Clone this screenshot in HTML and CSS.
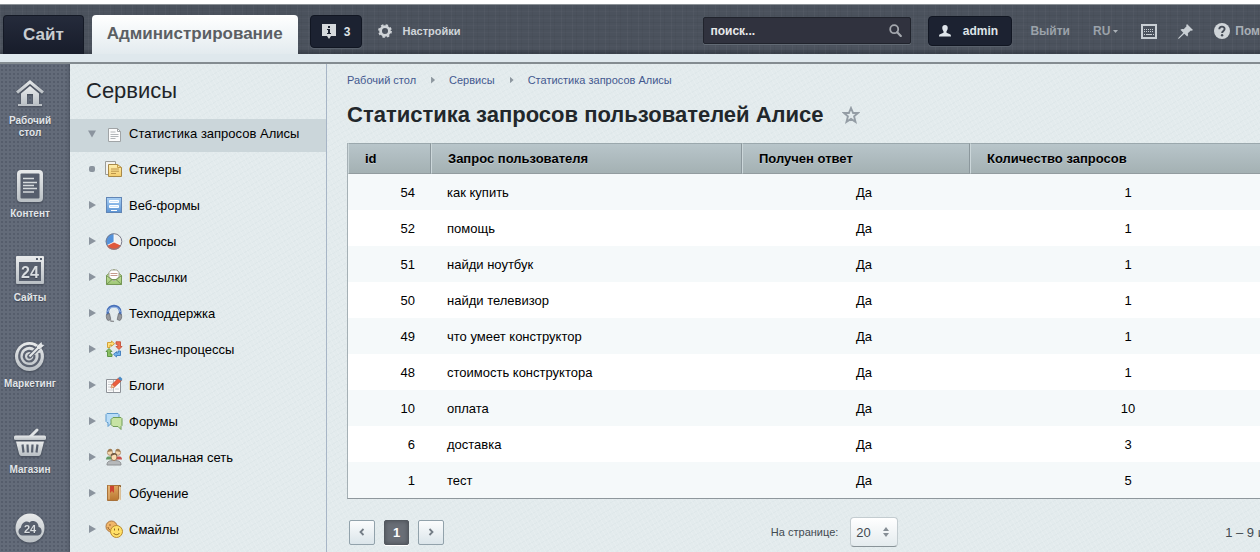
FILE: index.html
```html
<!DOCTYPE html>
<html lang="ru">
<head>
<meta charset="utf-8">
<title>Статистика запросов пользователей Алисе</title>
<link rel="stylesheet" href="styles.css">
</head>
<body>
<svg class="defs" aria-hidden="true">
  <defs>
    <linearGradient id="silver" x1="0" y1="0" x2="0" y2="1"><stop offset="0" stop-color="#e9ebec"/><stop offset="1" stop-color="#b9bfc4"/></linearGradient>
    <linearGradient id="blue" x1="0" y1="0" x2="0" y2="1"><stop offset="0" stop-color="#a9d0f5"/><stop offset="1" stop-color="#5b93d3"/></linearGradient>
    <linearGradient id="green" x1="0" y1="0" x2="0" y2="1"><stop offset="0" stop-color="#e0efb9"/><stop offset="1" stop-color="#9cc673"/></linearGradient>
    <linearGradient id="sand" x1="0" y1="0" x2="0" y2="1"><stop offset="0" stop-color="#fff0b0"/><stop offset="1" stop-color="#f3cc6c"/></linearGradient>
    <linearGradient id="brown" x1="0" y1="0" x2="0" y2="1"><stop offset="0" stop-color="#e0a860"/><stop offset="1" stop-color="#b97630"/></linearGradient>
  </defs>
</svg>
<header class="topbar">
  <nav class="tabs">
    <a class="tab tab-site" href="#">Сайт</a>
    <a class="tab tab-admin" href="#">Администрирование</a>
  </nav>
  <button class="dark-button notices" type="button">
    <svg width="14" height="15" viewBox="0 0 14 15"><path d="M0 0h14v12H9l-2 3-2-3H0z" fill="#d5d9dc"/><path d="M6 2h2v2H6zM5 5h3v4h1v1H5V9h1V6H5z" fill="#1d2331"/></svg>
    <span>3</span>
  </button>
  <a class="settings" href="#">
    <svg width="14" height="14" viewBox="0 0 14 14"><circle cx="7" cy="7" r="4.400" fill="none" stroke="#d0d4d8" stroke-width="2.800"/><circle cx="7" cy="7" r="6" fill="none" stroke="#d0d4d8" stroke-width="1.800" stroke-dasharray="2.400 2.310"/></svg>
    <span>Настройки</span>
  </a>
  <form class="search">
    <input type="text" aria-label="Поиск" value="поиск...">
    <button type="button" aria-label="Найти"><svg width="13" height="13" viewBox="0 0 13 13" fill="none" stroke="#a4a8ae"><circle cx="5.200" cy="5.200" r="4" stroke-width="1.800"/><path d="M8.200 8.200l3.600 3.800" stroke-width="2.200" stroke-linecap="round"/></svg></button>
  </form>
  <button class="dark-button user" type="button">
    <svg width="12" height="12" viewBox="0 0 12 12"><path d="M6 0c2 0 3 1.200 2.700 3.500-.2 1.400-.7 2-1.200 2.700v1.600L11 9.300c.8.400 1 1.200 1 2.200H0c0-1 .2-1.800 1-2.200l3.500-1.500V6.200C4 5.500 3.500 4.900 3.300 3.500 3 1.200 4 0 6 0z" fill="#dfe5ea"/></svg>
    <span>admin</span>
  </button>
  <nav class="tools">
    <a class="tool-text" href="#">Выйти</a>
    <a class="tool-text lang" href="#">RU<svg width="5" height="3" viewBox="0 0 5 3"><path d="M0 0h5L2.500 3z" fill="#a9afb6"/></svg></a>
    <a href="#" aria-label="Горячие клавиши"><svg width="16" height="15" viewBox="0 0 16 15"><path d="M1 1h14v13H1z" fill="none" stroke="#c9cfd4" stroke-width="2"/><path d="M3 5.500h10M3 7.500h10" stroke="#c9cfd4" stroke-dasharray="1 1"/><path d="M3 10.500h1m1 0h6m1 0h1" stroke="#c9cfd4"/></svg></a>
    <a href="#" aria-label="Закрепить"><svg width="15" height="15" viewBox="0 0 15 15"><path d="M9 0l6 6-1.200.8-1-.3L9.800 9.300c.4 1.400.2 2.500-.6 3.300L6.300 9.700 1.200 14.600 0 15l.5-1.200L5.300 8.700 2.400 5.800c.8-.8 1.900-1 3.300-.6l2.800-3-.3-1z" fill="#c9cfd4"/></svg></a>
    <a class="help" href="#"><svg width="16" height="16" viewBox="0 0 16 16"><circle cx="8" cy="8" r="8" fill="#d0d5d9"/><path d="M5.300 6.300C5.300 2.800 10.700 2.900 10.600 6c0 1.900-2.500 1.900-2.500 4" fill="none" stroke="#454c57" stroke-width="1.900"/><circle cx="8.100" cy="12.200" r="1.200" fill="#454c57"/></svg><span>Пом</span></a>
  </nav>
</header>
<div class="strip"></div>
<div class="layout">
  <nav class="rail">
    <a class="rail-item" href="#">
      <span class="rail-icon"><svg width="28" height="27" viewBox="0 0 28 27"><path d="M14 0l14 11.500-2 2.300L14 4 2 13.800 0 11.500z" fill="url(#silver)"/><path d="M14 6l9 7.500V24h3v2H2v-2h3V13.500zM11 14v10h6V14z" fill="url(#silver)" fill-rule="evenodd"/></svg></span>
      <span>Рабочий<br>стол</span>
    </a>
    <a class="rail-item rail-item-compact" href="#">
      <span class="rail-icon"><svg width="26" height="32" viewBox="0 0 26 32"><rect width="26" height="32" rx="4" fill="url(#silver)"/><rect x="3.500" y="3.500" width="19" height="25" rx="1" fill="#565e6d"/><path d="M6 8.500h11M6 12.500h14M6 15.500h11M6 18.500h14M6 22h11" stroke="#d5d9dc" stroke-width="1.700"/></svg></span>
      <span>Контент</span>
    </a>
    <a class="rail-item" href="#">
      <span class="rail-icon"><svg width="28" height="28" viewBox="0 0 28 28"><rect width="28" height="28" rx="1" fill="url(#silver)"/><path d="M20 2h2v2h-2zM24 2h2v2h-2zM3 6h22v19H3z" fill="#59616f"/><text class="rail-number" x="14" y="21.500" font-size="16" text-anchor="middle">24</text></svg></span>
      <span>Сайты</span>
    </a>
    <a class="rail-item" href="#">
      <span class="rail-icon"><svg width="30" height="30" viewBox="0 0 30 30"><circle cx="14.500" cy="15.500" r="14.500" fill="url(#silver)"/><g fill="none" stroke="#5c6371" stroke-width="2.200"><path d="M20.500 6.800A10.200 10.200 0 1 0 24.200 12"/><path d="M17.600 11.200A5.300 5.300 0 1 0 19.300 14"/></g><circle cx="14.500" cy="15.500" r="2.300" fill="#5c6371"/><path d="M14.500 15.500L27 3" stroke="#5c6371" stroke-width="4.500"/><path d="M14.500 15.500L26 4" stroke="#e3e6e8" stroke-width="2.200"/><path d="M22 5l4.500-4 .5 2.500 2.500.5L25 8h-3z" fill="#e3e6e8"/></svg></span>
      <span>Маркетинг</span>
    </a>
    <a class="rail-item" href="#">
      <span class="rail-icon"><svg width="32" height="28" viewBox="0 0 32 28"><path d="M16 9l7-7" stroke="#e1e4e6" stroke-width="3" stroke-linecap="round"/><rect y="7.500" width="32" height="4.500" rx="1.500" fill="url(#silver)"/><path d="M2 13.500h28l-3 12c-.4 1.600-1 2.500-2.500 2.500h-17C6 28 5.400 27.100 5 25.500z" fill="url(#silver)"/><path d="M8.500 16.500l1 8M13.500 16.500l.4 8M18.500 16.500l-.4 8M23.500 16.500l-1 8" stroke="#59616f" stroke-width="2.200"/></svg></span>
      <span>Магазин</span>
    </a>
    <a class="rail-item" href="#" aria-label="Битрикс24">
      <span class="rail-icon"><svg width="30" height="30" viewBox="0 0 30 30"><circle cx="15" cy="15" r="14.500" fill="url(#silver)"/><path d="M7.500 22.500C3 22.500 2 16.500 6 14.500 6.500 10 11 7 14.500 9.500c3-3 9-1 9 4.200 4.500 1.300 4 8.300-.5 8.800z" fill="#59616f"/><text class="rail-number" x="15" y="19.500" font-size="11" text-anchor="middle">24</text></svg></span>
    </a>
  </nav>
  <aside class="submenu">
    <h2>Сервисы</h2>
    <ul>
      <li class="active"><a href="#"><span class="marker marker-down"></span><svg width="18" height="18" viewBox="0 0 18 18"><path d="M3.500 3.500h9l3 3v10h-12z" fill="#fcfcfc" stroke="#a0a4a6"/><path d="M12.500 3.500v3h3" fill="none" stroke="#a0a4a6"/><path d="M5.500 7h5M5.500 9.500h8M5.500 11.500h8M5.500 13.500h5" stroke="#b2b6b9"/></svg>Статистика запросов Алисы</a></li>
      <li><a href="#"><span class="marker marker-dot"></span><svg width="18" height="18" viewBox="0 0 18 18"><path d="M.5 1.500h10v13H.5z" fill="#f3f3ef" stroke="#9b9c98"/><path d="M3.500 4.500h9l4 3v9h-13z" fill="url(#sand)" stroke="#a88948"/><path d="M12.500 4.500v3h4" fill="none" stroke="#c79c45"/><path d="M6 9h8M6 11.200h8M6 13.500h5" stroke="#bc9449"/></svg>Стикеры</a></li>
      <li><a href="#"><span class="marker"></span><svg width="18" height="18" viewBox="0 0 18 18"><rect x="1.500" y="1.500" width="15" height="15" fill="url(#blue)" stroke="#6185b5"/><path d="M4.500 4.500h9v2h-9zM4.500 9.500h9v2h-9zM6 14.500h6" fill="#cfe5fb" stroke="#fff"/></svg>Веб-формы</a></li>
      <li><a href="#"><span class="marker"></span><svg width="18" height="18" viewBox="0 0 18 18"><path d="M9 10V1.500a8 8 0 0 1 7.200 11.600z" fill="#eff0f1"/><path d="M9 10L1.800 13.500A8 8 0 0 1 9 1.500z" fill="#5592da"/><path d="M9 10l7.200 3.200A8 8 0 0 1 1.800 13.500z" fill="#e0583c"/><path d="M9 1.500V10l7 3.200M9 10l-7 3.500" fill="none" stroke="#fff" stroke-width=".8"/><circle cx="9" cy="9.500" r="7.800" fill="none" stroke="#7c7e8c"/></svg>Опросы</a></li>
      <li><a href="#"><span class="marker"></span><svg width="18" height="18" viewBox="0 0 18 18"><path d="M1.500 7.500L9 1.500l7.500 6v9h-15z" fill="url(#green)" stroke="#759755"/><path d="M4 9V4.500L6 2h6l2 2.500V9l-5 4z" fill="#fff" stroke="#a4a594"/><path d="M5.500 5.500h7M5.500 7.500h7" stroke="#c59c8e"/><path d="M1.500 16.500L7 11.500h4l5.500 5M1.500 7.500L7 12M16.500 7.500L11 12" fill="none" stroke="#759755"/></svg>Рассылки</a></li>
      <li><a href="#"><span class="marker"></span><svg width="18" height="18" viewBox="0 0 18 18"><path d="M2.800 11V8C2.800 .2 15.200 .2 15.200 8v3" fill="none" stroke="#4871ba" stroke-width="2.600"/><path d="M2.800 8C3.300 1.500 14.700 1.500 15.200 8" fill="none" stroke="#a3c0ea"/><path d="M1.500 10.500l3-1 1.300 6-2.500 1C1.500 16 1 13 1.500 10.500zM16.500 10.500l-3-1-1.300 6 2.500 1c1.800-.5 2.300-3.500 1.800-6z" fill="#96989c" stroke="#63666b" stroke-width=".7"/><path d="M5 16.500c1 1 2 1 4 1" fill="none" stroke="#909296" stroke-width="1.500"/></svg>Техподдержка</a></li>
      <li><a href="#"><span class="marker"></span><svg width="18" height="18" viewBox="0 0 18 18"><path d="M2.500 7.500v-5h4V1L9.500 3.700l-3 2.600V5H5v2.500z" fill="#ffe07a" stroke="#d09a2c" stroke-width=".9"/><path d="M11 1.800h4.500v4.700H17l-3 3-3-3h1.800V4.300H11z" fill="#f0704e" stroke="#c4503a" stroke-width=".9"/><path d="M15.500 11v4.500h-4V17L8.500 14.300l3-2.600V13H13v-2z" fill="#74b4ec" stroke="#3e7cbd" stroke-width=".9"/><path d="M7 16.500H2.500v-5H1l3-3 3 3H5.300V14H7z" fill="#8bc063" stroke="#568f3c" stroke-width=".9"/></svg>Бизнес-процессы</a></li>
      <li><a href="#"><span class="marker"></span><svg width="18" height="18" viewBox="0 0 18 18"><path d="M1.500 3.500h14v13h-14z" fill="#fbfbfb" stroke="#8e9298"/><path d="M3 6h5M3 8.500h4M3 11h3M10 13h4M3 14h5" stroke="#cdd0d2"/><path d="M8.500 4v12" stroke="#b7babd"/><path d="M6 12l1-3.500L13.500 2l3 2.500L9.500 11z" fill="#ec5d3e" stroke="#b44b2e" stroke-width=".7"/><path d="M6 12l1-3.500L9.500 11z" fill="#f1cc99"/><path d="M13 2.500L15 .5l2.500 2.500-1.500 2z" fill="#4b8bc4"/></svg>Блоги</a></li>
      <li><a href="#"><span class="marker"></span><svg width="18" height="18" viewBox="0 0 18 18"><path d="M2 1.500h11l1 1v7l-1 1H7l-4 4v-4H2l-1-1v-7z" fill="#b8dcf7" stroke="#5f9bcd"/><path d="M8 5.500h8l1 1v7l-1 1v3l-3-3H8l-2-2v-5z" fill="#c7e3a4" stroke="#709c57"/></svg>Форумы</a></li>
      <li><a href="#"><span class="marker"></span><svg width="18" height="18" viewBox="0 0 18 18"><path d="M1 11.500c0-2.500 1.500-3 3-3h3v3z" fill="#629a63"/><path d="M11 8.500h3c1.500 0 3 .5 3 3h-6z" fill="#c8504a"/><circle cx="5" cy="4.700" r="2.600" fill="#f5d5ab" stroke="#a98a68" stroke-width=".8"/><circle cx="13" cy="4.700" r="2.600" fill="#f5d5ab" stroke="#a98a68" stroke-width=".8"/><path d="M2.500 4c0-4 5-4 5-1zM10.500 3c0-3 5-3 5 1z" fill="#a07d54"/><path d="M2 17c0-3.500 2-4.500 7-4.500s7 1 7 4.500z" fill="#b6b9bb" stroke="#8d9093"/><ellipse cx="9" cy="9" rx="2.900" ry="3.600" fill="#fadcb2" stroke="#8e6c4c" stroke-width=".8"/><path d="M5.800 8C5.300 4 12.700 4 12.200 8L10 6.500z" fill="#6f5843"/></svg>Социальная сеть</a></li>
      <li><a href="#"><span class="marker"></span><svg width="18" height="18" viewBox="0 0 18 18"><path d="M2.500 1.500h13v14h-13z" fill="url(#brown)" stroke="#8f5f2c"/><path d="M4 15.500h11V3" fill="none" stroke="#f3dfbb" stroke-width="1.500"/><path d="M2.500 1.500h11v13l-1 2h-10z" fill="url(#brown)" stroke="#a8723a"/><path d="M4 1.500v14" stroke="#eec38d"/><path d="M5 2h4v7L7 7 5 9z" fill="#cc4430"/></svg>Обучение</a></li>
      <li><a href="#"><span class="marker"></span><svg width="18" height="18" viewBox="0 0 18 18"><circle cx="6.500" cy="6.500" r="5.500" fill="#f0b669" stroke="#ad7640"/><circle cx="5" cy="5" r=".8" fill="#8f5d2c"/><path d="M3 7c0 1.500 1 2.500 2 3" fill="none" stroke="#8f5d2c"/><circle cx="11.500" cy="11.500" r="6" fill="#ffe067" stroke="#b8892e"/><path d="M9.500 8.500v2M13.500 8.500v2M8.500 13c1.500 2.200 4.500 2.200 6 0" fill="none" stroke="#8f6420"/></svg>Смайлы</a></li>
    </ul>
  </aside>
  <main class="content">
    <nav class="crumbs">
      <a href="#">Рабочий стол</a><span class="crumb-arrow"></span><a href="#">Сервисы</a><span class="crumb-arrow"></span><a href="#">Статистика запросов Алисы</a>
    </nav>
    <div class="title">
      <h1>Статистика запросов пользователей Алисе</h1>
      <button type="button" aria-label="Добавить в избранное"><svg width="18" height="18" viewBox="0 0 18 18"><path d="M9 2l2.100 5H16l-3.900 3.400 1.400 5.400L9 12.900l-4.500 2.900 1.400-5.400L2 7h4.900z" fill="none" stroke="#949da5" stroke-width="1.900"/></svg></button>
    </div>
    <table>
      <colgroup><col class="col-id"><col class="col-query"><col class="col-answer"><col></colgroup>
      <thead><tr><th>id</th><th>Запрос пользователя</th><th>Получен ответ</th><th>Количество запросов</th></tr></thead>
      <tbody>
        <tr><td>54</td><td>как купить</td><td>Да</td><td>1</td></tr>
        <tr><td>52</td><td>помощь</td><td>Да</td><td>1</td></tr>
        <tr><td>51</td><td>найди ноутбук</td><td>Да</td><td>1</td></tr>
        <tr><td>50</td><td>найди телевизор</td><td>Да</td><td>1</td></tr>
        <tr><td>49</td><td>что умеет конструктор</td><td>Да</td><td>1</td></tr>
        <tr><td>48</td><td>стоимость конструктора</td><td>Да</td><td>1</td></tr>
        <tr><td>10</td><td>оплата</td><td>Да</td><td>10</td></tr>
        <tr><td>6</td><td>доставка</td><td>Да</td><td>3</td></tr>
        <tr><td>1</td><td>тест</td><td>Да</td><td>5</td></tr>
      </tbody>
    </table>
    <div class="pager">
      <div class="pages">
        <button type="button" aria-label="Назад"><svg width="6" height="8" viewBox="0 0 6 8"><path d="M4.500 1L1.500 4l3 3" fill="none" stroke="#747d86" stroke-width="1.800"/></svg></button>
        <button class="current" type="button">1</button>
        <button type="button" aria-label="Вперёд"><svg width="6" height="8" viewBox="0 0 6 8"><path d="M1.500 1l3 3-3 3" fill="none" stroke="#747d86" stroke-width="1.800"/></svg></button>
      </div>
      <div class="per-page">
        <label for="page-size">На странице:</label>
        <div class="select">
          <select id="page-size"><option>20</option></select>
          <svg width="6" height="10" viewBox="0 0 6 10"><path d="M0 4l3-4 3 4zM0 6h6l-3 4z" fill="#868e95"/></svg>
        </div>
      </div>
      <span class="count">1 – 9 и</span>
    </div>
  </main>
</div>
</body>
</html>
```
FILE: styles.css
```css
* { box-sizing: border-box; }

body {
  margin: 0;
  min-height: 100vh;
  overflow: hidden;
  display: flex;
  flex-direction: column;
  background: #fff;
  color: #000;
  font-family: "Liberation Sans", Arial, sans-serif;
  font-size: 13px;
}

a { color: inherit; text-decoration: none; }
button, input, select { font: inherit; margin: 0; padding: 0; border: 0; background: none; color: inherit; }
svg { display: block; flex: none; }
h1, h2, ul { margin: 0; padding: 0; }
ul { list-style: none; }
.defs { position: absolute; width: 0; height: 0; }

/* top bar */
.topbar {
  display: flex;
  align-items: flex-start;
  flex: none;
  height: 50px;
  margin-top: 4px;
  padding-left: 3px;
  border-top: 1px solid #8c9297;
  background:
    repeating-linear-gradient(90deg, rgba(255,255,255,.03) 0 1px, transparent 1px 4px, rgba(0,0,0,.03) 4px 5px, transparent 5px 11px),
    repeating-linear-gradient(0deg, rgba(255,255,255,.02) 0 1px, transparent 1px 3px, rgba(0,0,0,.04) 3px 4px, transparent 4px 7px),
    linear-gradient(#4b525d, #4b525d 44px, #353b45);
  white-space: nowrap;
  font-weight: bold;
  font-size: 12px;
}
.tabs { display: flex; gap: 8px; margin-top: 10px; }
.tab { height: 39px; line-height: 38px; font-size: 17px; border-radius: 4px 4px 0 0; }
.tab-site { padding: 0 19px; background: linear-gradient(#252b3b, #171c2a); color: #c9cdd1; border: 1px solid #141925; border-bottom: 0; }
.tab-admin { padding: 0 15px; background: linear-gradient(#fff, #e3ebef); color: #5b5f64; }

.dark-button {
  display: flex;
  align-items: center;
  border: 1px solid #111622;
  border-radius: 4px;
  background: #1c2231;
  color: #dfe4e8;
  box-shadow: 0 1px 0 #59616c;
}
.notices { gap: 8px; height: 33px; margin: 10px 0 0 12px; padding: 0 11px; }
.settings { display: flex; align-items: center; gap: 10px; height: 32px; margin: 10px 0 0 16px; color: #d0d5d9; font-size: 11px; }
.search {
  display: flex;
  align-items: center;
  width: 208px;
  height: 27px;
  margin: 12px 0 0 auto;
  padding: 0 8px 0 6px;
  border: 1px solid #20232c;
  border-radius: 2px;
  background: #30323e;
  color: #e7e9ea;
  box-shadow: 0 1px 0 #626a74;
}
.search input { flex: 1; min-width: 0; outline: 0; }
.user { gap: 8px; height: 30px; margin: 11px 0 0 17px; padding: 0 10px; }
.user span { min-width: 42px; }
.tools { display: flex; align-items: center; height: 32px; margin: 10px 0 0 18px; gap: 21px; color: #9ba2aa; }
.tool-text { margin-right: 2px; }
.lang { display: flex; align-items: center; gap: 3px; }
.help { display: flex; align-items: center; gap: 5px; color: #a9afb6; }

.strip { flex: none; height: 10px; background: #dfe8ed; border-bottom: 2px solid #848c91; }

/* page body */
.layout {
  display: flex;
  flex: 1;
  background:
    repeating-linear-gradient(60deg, rgba(255,255,255,.12) 0 1px, transparent 1px 4px),
    repeating-linear-gradient(150deg, rgba(170,190,195,.08) 0 1px, transparent 1px 5px),
    #e3ebed;
}

.rail {
  flex: none;
  width: 70px;
  height: calc(100vh - 64px);
  overflow: hidden;
  padding: 11px 10px 0 0;
  background:
    radial-gradient(circle, rgba(45,52,66,.25) 0 1px, transparent 1px) 0 0 / 4px 4px,
    linear-gradient(90deg, #636b79 0 66px, #525a68);
  color: #e2e5e8;
  font-size: 10px;
  font-weight: bold;
  line-height: 12px;
  text-align: center;
  text-shadow: 0 1px 1px #3d4451;
}
.rail-item { display: flex; flex-direction: column; align-items: center; gap: 4px; min-height: 86px; padding-bottom: 29px; }
.rail-item-compact { min-height: 84px; padding-bottom: 0; }
.rail-icon { display: flex; align-items: center; justify-content: center; height: 36px; filter: drop-shadow(0 1px 1px #414855); }
.rail-number { fill: #d9dde0; font-weight: bold; }

.submenu { flex: none; width: 257px; border-right: 1px solid #a7b5c6; }
.submenu h2 { padding: 14px 16px 16px; font-size: 22px; font-weight: normal; line-height: 25px; color: #1f2529; }
.submenu a { display: flex; align-items: center; height: 36px; padding: 0 0 2px 18px; white-space: nowrap; }
.submenu a svg { margin: 0 6px 0 9px; }
.submenu .active a { height: 33px; padding-bottom: 4px; background: #cbd6da; }
.marker { flex: none; width: 8px; height: 8px; background: #8b949e; clip-path: polygon(1px 0, 8px 4px, 1px 8px); }
.marker-down { clip-path: polygon(0 1px, 8px 1px, 4px 8px); }
.marker-dot { clip-path: inset(1px 1px 1px 1px round 2px); }

/* main column */
.content { flex: 1; min-width: 0; padding: 8px 0 0 20px; }
.crumbs { display: flex; align-items: center; height: 16px; font-size: 11px; color: #44598f; white-space: nowrap; }
.crumb-arrow { width: 4px; height: 7px; margin: 0 14px 0 15px; background: #8d979f; clip-path: polygon(0 0, 100% 50%, 0 100%); }
.title { display: flex; align-items: center; gap: 18px; height: 36px; margin: 9px 0 10px; white-space: nowrap; }
.title h1 { font-size: 22px; line-height: 24px; color: #22272b; }

table { width: calc(100% + 10px); table-layout: fixed; border-collapse: separate; border-spacing: 0; border-left: 1px solid #a5b0b5; border-bottom: 1px solid #8e979c; }
.col-id { width: 83px; }
.col-query { width: 311px; }
.col-answer { width: 228px; }
th {
  height: 31px;
  padding: 0 16px;
  text-align: left;
  border: 1px solid;
  border-color: #9ba8ad #8b979c #929c9f #ccd7da;
  background: linear-gradient(#b8c5ca, #a4b1b3);
  text-shadow: 0 1px 0 #c6d0d4;
}
td { height: 36px; padding: 0 0 0 16px; background: #fff; text-align: center; }
tr:nth-child(odd) td { background: #f5f9fa; }
td:nth-child(1) { padding: 0 16px 0 0; text-align: right; }
td:nth-child(2) { text-align: left; }

.pager { display: flex; align-items: center; justify-content: space-between; height: 30px; margin: 18px -5px 0 2px; color: #424a51; white-space: nowrap; }
.pages { display: flex; gap: 9px; }
.pages button { display: flex; align-items: center; justify-content: center; width: 26px; height: 25px; border: 1px solid #92a2ab; border-radius: 2px; background: linear-gradient(#fbfcfd, #dbe5ea); }
.pages .current { width: 25px; border-color: #535960; background: #696e76; color: #fff; font-weight: bold; box-shadow: inset 0 0 4px #474c53, 0 1px 0 #fff; }
.per-page { display: flex; align-items: center; gap: 12px; }
.per-page label { font-size: 11px; }
.select { position: relative; }
.select select { appearance: none; width: 48px; height: 30px; padding-left: 5px; border: 1px solid #c3ccd0; border-bottom-color: #899398; border-radius: 4px; background: linear-gradient(#fff, #e4ebee); font-size: 13px; color: #424a51; }
.select svg { position: absolute; right: 9px; top: 10px; pointer-events: none; }
```
